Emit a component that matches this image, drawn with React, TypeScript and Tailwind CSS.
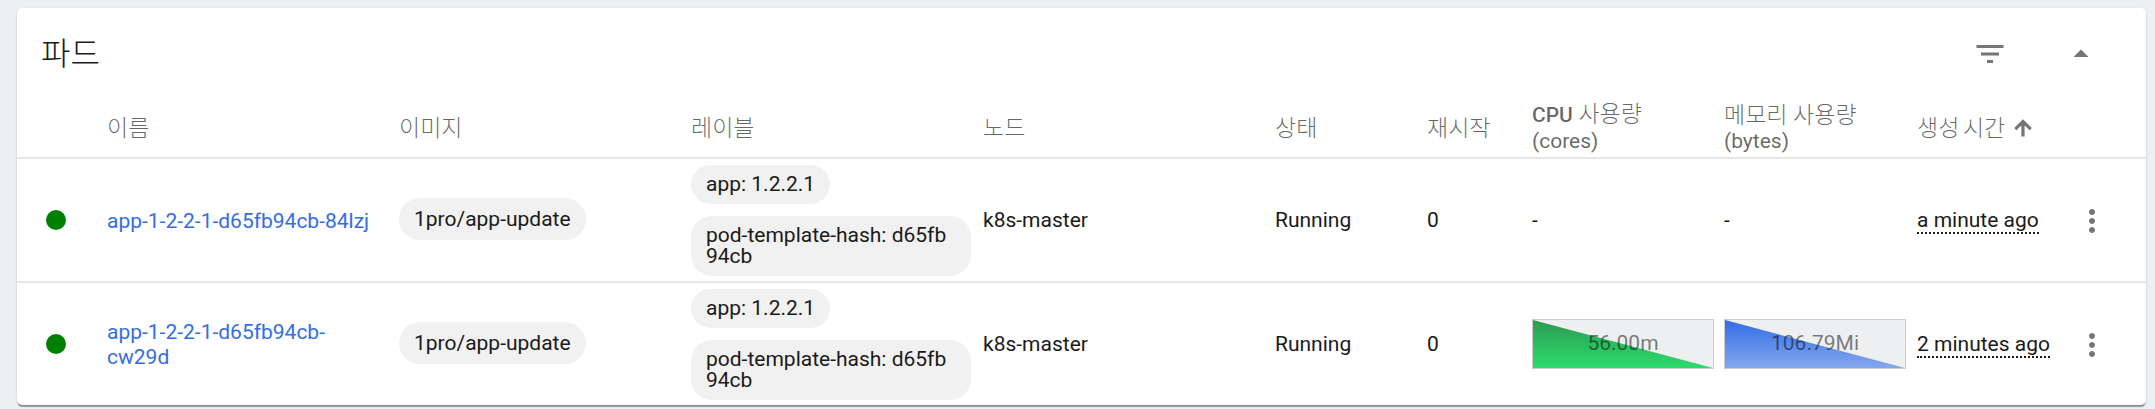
const gridCols =
  "grid grid-cols-[90px_292px_292px_292px_292px_152px_105px_192px_193px_156px_73px]";

type Pod = {
  name: string;
  age: string;
  cpu?: string;
  memory?: string;
};

const pods: Pod[] = [
  { name: "app-1-2-2-1-d65fb94cb-84lzj", age: "a minute ago" },
  {
    name: "app-1-2-2-1-d65fb94cb-cw29d",
    age: "2 minutes ago",
    cpu: "56.00m",
    memory: "106.79Mi",
  },
];

function Chip({ children }: { children: React.ReactNode }) {
  return (
    <span className="w-fit max-w-[280px] break-all rounded-[21px] bg-[#f1f1f1] px-[15px] py-[9px] leading-[21px]">
      {children}
    </span>
  );
}

function Sparkline({ id, value, from, to }: { id: string; value: string; from: string; to: string }) {
  return (
    <div className="relative h-[50px] w-[182px] border border-[#cccccc] bg-[#edeff1]">
      <svg className="h-full w-full" viewBox="0 0 180 48" preserveAspectRatio="none">
        <defs>
          <linearGradient id={id} x1="0" y1="0" x2="0" y2="1">
            <stop offset="0" stopColor={from} />
            <stop offset="1" stopColor={to} />
          </linearGradient>
        </defs>
        <polygon points="0,0 180,48 0,48" fill={`url(#${id})`} />
      </svg>
      <span className="absolute inset-0 flex items-center justify-center text-black/50">{value}</span>
    </div>
  );
}

function Row({ pod, index }: { pod: Pod; index: number }) {
  return (
    <div className={`${gridCols} h-[124px] items-center border-t-2 border-[#e6e6e6] text-[21px] text-[#1a1a1a]`}>
      <div className="pl-[29px]">
        <div className="h-5 w-5 rounded-full bg-[#008000]" />
      </div>
      <a className="pr-[12px] pt-[2px] leading-[25px] text-[#326de6]">{pod.name}</a>
      <div>
        <Chip>1pro/app-update</Chip>
      </div>
      <div className="flex flex-col gap-3">
        <Chip>app: 1.2.2.1</Chip>
        <Chip>pod-template-hash: d65fb94cb</Chip>
      </div>
      <div className="pt-[2px]">k8s-master</div>
      <div className="pt-[2px]">Running</div>
      <div className="pt-[2px]">0</div>
      <div>
        {pod.cpu ? (
          <Sparkline id={`cpu-${index}`} value={pod.cpu} from="#2e9a52" to="#2bdc6c" />
        ) : (
          <div className="pt-[2px]">-</div>
        )}
      </div>
      <div>
        {pod.memory ? (
          <Sparkline id={`mem-${index}`} value={pod.memory} from="#326de6" to="#84a7ee" />
        ) : (
          <div className="pt-[2px]">-</div>
        )}
      </div>
      <div className="pt-[2px]">
        <span className="border-b-2 border-dotted border-[#1a1a1a] leading-[22px]">{pod.age}</span>
      </div>
      <div className="pl-[1px] pt-[2px]">
        <svg className="h-9 w-9 fill-[#757575]" viewBox="0 0 24 24">
          <path d="M12 8c1.1 0 2-.9 2-2s-.9-2-2-2-2 .9-2 2 .9 2 2 2zm0 2c-1.1 0-2 .9-2 2s.9 2 2 2 2-.9 2-2-.9-2-2-2zm0 6c-1.1 0-2 .9-2 2s.9 2 2 2 2-.9 2-2-.9-2-2-2z" />
        </svg>
      </div>
    </div>
  );
}

export default function App() {
  return (
    <div className="h-[409px] overflow-hidden bg-[#edeff1] pl-[17px] pt-2 font-['Roboto','Noto_Sans_CJK_KR',sans-serif]">
      <div className="w-[2129px] rounded-[5px] bg-white shadow-[0_3px_1px_-1px_rgba(0,0,0,0.3),0_1px_1px_0_rgba(0,0,0,0.14),0_1px_3px_0_rgba(0,0,0,0.12)]">
        <div className="flex h-[91px] items-center justify-between pl-[24px] pr-[47px]">
          <h1 className="text-[32px] font-light text-[#1a1a1a]">파드</h1>
          <div className="flex gap-[55px]">
            <svg className="h-9 w-9 fill-[#757575]" viewBox="0 0 24 24">
              <path d="M10 18h4v-2h-4v2zM3 6v2h18V6H3zm3 7h12v-2H6v2z" />
            </svg>
            <svg className="h-9 w-9 fill-[#757575]" viewBox="0 0 24 24">
              <path d="M7 14l5-5 5 5z" />
            </svg>
          </div>
        </div>
        <div className={`${gridCols} h-[58px] items-center text-[23px] leading-[25px] font-light text-black/60`}>
          <div />
          <div>이름</div>
          <div>이미지</div>
          <div>레이블</div>
          <div>노드</div>
          <div>상태</div>
          <div>재시작</div>
          <div>
            <span className="text-[21px] font-medium">CPU</span> 사용량
            <br />
            <span className="text-[21px] font-normal">(cores)</span>
          </div>
          <div>
            메모리 사용량
            <br />
            <span className="text-[21px] font-normal">(bytes)</span>
          </div>
          <div className="flex items-center gap-[6px] [word-spacing:-2px]">
            생성 시간
            <svg className="h-6 w-6 fill-[#757575] stroke-[#757575] stroke-[1.2]" viewBox="0 0 24 24">
              <path d="M4 12l1.41 1.41L11 7.83V20h2V7.83l5.58 5.59L20 12l-8-8-8 8z" />
            </svg>
          </div>
          <div />
        </div>
        {pods.map((pod, i) => (
          <Row key={pod.name} pod={pod} index={i} />
        ))}
      </div>
    </div>
  );
}
